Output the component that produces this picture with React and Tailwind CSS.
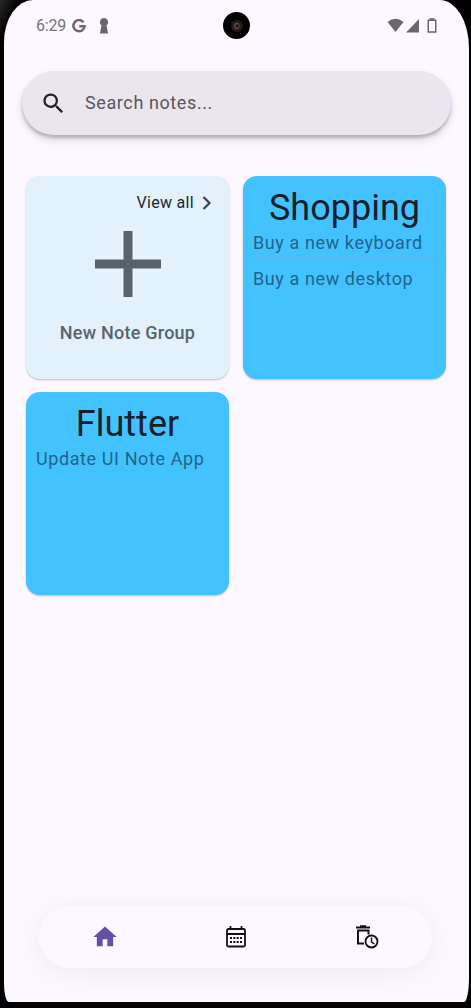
import React from "react";

function StatusBar() {
  return (
    <div className="flex h-[51px] shrink-0 items-center pl-[32px] pr-[32px] text-[#77727b]">
      <span className="w-[36px] text-[16px] leading-5 tracking-[-0.2px]">6:29</span>
      <svg className="h-[14px] w-[14px]" viewBox="0 0 14 14" fill="none" stroke="#6b676e" strokeWidth="2.5">
        <path d="M11.4 3.2A5.6 5.6 0 1 0 12.6 7.2H7.2" />
      </svg>
      <svg className="ml-[13px] h-4 w-[10px]" viewBox="0 0 10 16" fill="#6b676e">
        <path d="M5 0a4 4 0 0 1 2.5 7.2L9 15.500H1L2.500 7.200A4 4 0 0 1 5 0Z" />
      </svg>
      <div className="ml-[114px] flex h-[27px] w-[27px] items-center justify-center rounded-full bg-black">
        <div className="flex h-[12px] w-[12px] items-center justify-center rounded-full bg-[#241b19]">
          <div className="h-[6px] w-[6px] rounded-full border border-[#745547] border-r-[#493250] bg-[#2c1927]" />
        </div>
      </div>
      <svg className="ml-auto h-4 w-[50px]" viewBox="0 0 50 16" fill="#6b676e">
        <path d="M.5 4Q8.500-2.500 16.500 4L8.500 14Z" />
        <path d="M19 14.500H32V1Z" />
        <path d="M42.500 1.500V.3H47.500V1.500H49.500V14.800H40.500V1.500ZM42 3V13.300H48V3Z" fillRule="evenodd" />
      </svg>
    </div>
  );
}

function SearchBar() {
  return (
    <div className="ml-[18px] mt-[20px] flex h-16 w-[429px] shrink-0 items-center rounded-full bg-[#ebe5ed] pl-[18px] shadow-[0_3px_3px_rgba(0,0,0,0.18),0_5px_9px_rgba(0,0,0,0.14)]">
      <svg className="h-[27px] w-[27px]" viewBox="0 0 24 24" fill="#222027">
        <path d="M15.500 14h-.79l-.28-.27A6.470 6.470 0 0 0 16 9.500 6.500 6.500 0 1 0 9.500 16c1.610 0 3.090-.59 4.230-1.570l.27.28v.79l5 4.990L20.490 19zM9.500 14A4.500 4.500 0 1 1 14 9.500 4.500 4.500 0 0 1 9.500 14" />
      </svg>
      <span className="ml-[18px] text-[18px] leading-6 tracking-[0.6px] text-[#5a555f]">Search notes...</span>
    </div>
  );
}

function NewGroupCard() {
  return (
    <div className="flex h-[203px] w-[203px] flex-col items-center rounded-[14px] bg-[#e3f1fc] shadow-[0_1px_2px_rgba(0,0,0,0.24)]">
      <div className="mt-[16px] flex h-[22px] items-center self-end pr-[17px] text-[#24272d]">
        <span className="text-[16px] tracking-[0.3px]">View all</span>
        <svg className="ml-[8px] h-[14px] w-[10px]" viewBox="0 0 10 14" fill="none" stroke="#3e454c" strokeWidth="2.2">
          <path d="m1.500 1 6 6-6 6" />
        </svg>
      </div>
      <svg className="mt-[17px] h-[66px] w-[66px]" viewBox="0 0 66 66" fill="#58626a">
        <path d="M28.500 0h9v28.500H66v9H37.500V66h-9V37.500H0v-9h28.500Z" />
      </svg>
      <span className="mt-[24px] text-[18px] font-medium leading-6 tracking-[0.24px] text-[#59646b]">New Note Group</span>
    </div>
  );
}

function NoteCard({ title, notes }) {
  return (
    <div className="h-[203px] w-[203px] rounded-[14px] bg-[#42c3ff] px-[10px] pt-[10px] shadow-[0_1px_2px_rgba(0,0,0,0.24)]">
      <h2 className="text-center text-[36px] font-normal leading-[44px] text-[#17202a]">{title}</h2>
      {notes.map((note, i) => (
        <div key={note} className={i ? "mt-[2px] border-t border-[#5bb5e5] pt-[7px]" : ""}>
          <p className="whitespace-nowrap text-[18px] leading-[26px] tracking-[0.6px] text-[#22648a]">{note}</p>
        </div>
      ))}
    </div>
  );
}

function BottomNav() {
  return (
    <nav className="mb-[34px] ml-[35px] mt-auto grid h-[62px] w-[393px] grid-cols-3 place-items-center rounded-full bg-[#fdf7ff] shadow-[0_5px_28px_rgba(0,0,0,0.06)]">
      <svg className="h-7 w-7" viewBox="0 0 24 24" fill="#6550a3">
        <path d="M10 20v-6h4v6h5v-8h3L12 3 2 12h3v8z" />
      </svg>
      <svg className="h-[22px] w-[22px]" viewBox="0 0 22 22" fill="none" stroke="#111014" strokeWidth="1.8">
        <rect x="2" y="3" width="18" height="17.500" rx="1.500" />
        <path d="M2 8h18M5.500 0v4M16.500 0v4" />
        <path d="M5 12h12M5 16h12" strokeWidth="2" strokeDasharray="2 1.350" />
      </svg>
      <svg className="h-[24px] w-[24px]" viewBox="0 0 24 24" fill="none" stroke="#111014" strokeWidth="2">
        <path d="M1 2.500h14M5 1.300h6M9 18.500H3V5.500h10.500v4" />
        <circle cx="16.500" cy="16.500" r="6" strokeWidth="1.800" />
        <path d="M16.500 12.500v4.500l3 2" strokeWidth="1.500" />
      </svg>
    </nav>
  );
}

export default function App() {
  return (
    <div className="h-[1008px] w-[471px] overflow-hidden bg-black bg-[linear-gradient(115deg,#292929_0,#171717_8px,#000_18px)] pb-[6px] pl-[4px] pr-[2px] font-[Roboto,sans-serif]">
      <main className="flex h-[1002px] w-[465px] flex-col overflow-hidden rounded-tl-[29px_42px] rounded-tr-[29px_48px] rounded-br-[5px_24px] rounded-bl-[5px_18px] bg-[#fdf7ff]">
        <StatusBar />
        <SearchBar />
        <section className="ml-[22px] mt-[41px] grid grid-cols-[203px_203px] gap-x-[14px] gap-y-[13px]">
          <NewGroupCard />
          <NoteCard title="Shopping" notes={["Buy a new keyboard", "Buy a new desktop"]} />
          <NoteCard title="Flutter" notes={["Update UI Note App"]} />
        </section>
        <BottomNav />
      </main>
    </div>
  );
}
